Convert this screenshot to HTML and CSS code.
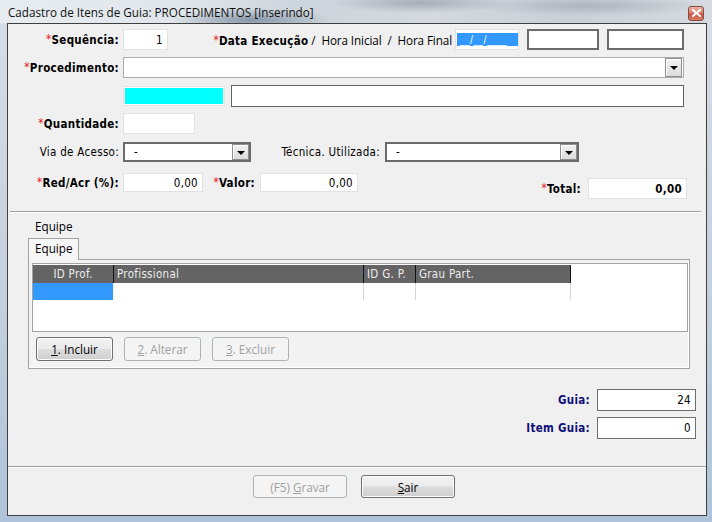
FILE: index.html
```html
<!DOCTYPE html>
<html>
<head>
<meta charset="utf-8">
<title>Cadastro de Itens de Guia</title>
<link rel="stylesheet" href="styles.css">
</head>
<body>
<div class="window">
  <div class="titlebar">
    <span class="title">Cadastro de Itens de Guia: PROCEDIMENTOS [Inserindo]</span>
    <span class="close"><svg width="9" height="8" viewBox="0 0 9 8"><path d="M1 1 L8 7 M8 1 L1 7" stroke="#fff" stroke-width="2" stroke-linecap="square"/></svg></span>
  </div>
  <div class="client">
    <div class="form">
      <div class="row r1">
        <span class="lbl b"><i>*</i>Sequência:</span>
        <div class="edit light seq num">1</div>
        <div class="lbl2"><span class="b"><i>*</i>Data Execução</span><span class="seg">&nbsp;/&nbsp; Hora Inicial&nbsp; /&nbsp; Hora Final</span></div>
        <div class="edit light date"><span class="sel">__/__/____</span></div>
        <div class="edit dark hi"></div>
        <div class="edit dark hf"></div>
      </div>
      <div class="row r2">
        <span class="lbl b"><i>*</i>Procedimento:</span>
        <div class="combo proc"><span class="ctext"></span><span class="dd"><span class="arrow"></span></span></div>
      </div>
      <div class="row r3">
        <span class="lbl"></span>
        <div class="cyanbox"><div class="cyan"></div></div>
        <div class="edit mid desc"></div>
      </div>
      <div class="row r4">
        <span class="lbl b"><i>*</i>Quantidade:</span>
        <div class="edit light qtd"></div>
      </div>
      <div class="row r5">
        <span class="lbl">Via de Acesso:</span>
        <div class="combo dark via"><span class="ctext">-</span><span class="dd"><span class="arrow"></span></span></div>
        <span class="lbl tec">Técnica. Utilizada:</span>
        <div class="combo dark tecc"><span class="ctext">-</span><span class="dd"><span class="arrow"></span></span></div>
      </div>
      <div class="row r6">
        <div class="grp">
          <span class="lbl b"><i>*</i>Red/Acr (%):</span>
          <div class="edit light red num">0,00</div>
          <span class="lbl b val"><i>*</i>Valor:</span>
          <div class="edit light valor num">0,00</div>
        </div>
        <div class="grp tot">
          <span class="lbl b totl"><i>*</i>Total:</span>
          <div class="edit light total num b">0,00</div>
        </div>
      </div>
    </div>

    <div class="sep top"></div>

    <div class="caption">Equipe</div>
    <div class="tabs"><span class="tab">Equipe</span></div>
    <div class="panel">
      <div class="grid">
        <div class="ghead">
          <span class="gc c1 center">ID Prof.</span>
          <span class="gc c2">Profissional</span>
          <span class="gc c3">ID G. P.</span>
          <span class="gc c4">Grau Part.</span>
        </div>
        <div class="grow">
          <span class="dc c1 selcell"></span>
          <span class="dc d2"></span>
          <span class="dc d3"></span>
          <span class="dc d4"></span>
        </div>
      </div>
      <div class="gbtns">
        <span class="btn act"><u>1</u>. Incluir</span>
        <span class="btn dis"><u>2</u>. Alterar</span>
        <span class="btn dis"><u>3</u>. Excluir</span>
      </div>
    </div>

    <div class="guia">
      <div class="grow2">
        <span class="glbl">Guia:</span>
        <div class="edit gbox num">24</div>
      </div>
      <div class="grow2 second">
        <span class="glbl">Item Guia:</span>
        <div class="edit gbox num">0</div>
      </div>
    </div>

    <div class="sep bottom"></div>

    <div class="footer">
      <span class="btn fbtn dis">(F5)&nbsp; <u>G</u>ravar</span>
      <span class="btn fbtn act"><u>S</u>air</span>
    </div>
  </div>
</div>
</body>
</html>
```

FILE: styles.css
```css
* { box-sizing: border-box; }
html, body { margin: 0; padding: 0; }
body {
  width: 712px;
  height: 522px;
  overflow: hidden;
  font-family: "DejaVu Sans Condensed", "DejaVu Sans", sans-serif;
  font-size: 11.5px;
  letter-spacing: 0.3px;
  color: #000;
}
.window {
  width: 712px;
  height: 522px;
  display: flex;
  flex-direction: column;
  padding: 0 5px 6px 7px;
  background: linear-gradient(to bottom, #d6dee6 0%, #c3cfdc 60%, #aec3da 100%);
}
.titlebar {
  height: 23px;
  margin: 0 -5px 0 -7px;
  padding-left: 8px;
  display: flex;
  align-items: center;
  background:
    radial-gradient(ellipse 80px 12px at 250px 20px, rgba(70, 95, 120, .55), transparent),
    radial-gradient(ellipse 90px 10px at 420px 3px, rgba(110, 120, 130, .45), transparent),
    radial-gradient(ellipse 120px 10px at 590px 6px, rgba(120, 128, 138, .35), transparent),
    linear-gradient(to right, #e7ecf0 0%, #e0e6eb 25%, #cdd5dc 42%, #d3d9df 60%, #c9d0d7 80%, #d5dbe1 100%);
}
.title {
  font-family: "Open Sans", "Noto Sans", sans-serif;
  font-size: 11.7px;
  color: #111;
  letter-spacing: 0;
}
.close {
  margin-left: auto;
  margin-right: 8px;
  margin-top: 3px;
  width: 16px;
  height: 15px;
  border: 1px solid #8a4a40;
  border-radius: 3px;
  background: linear-gradient(to bottom, #eab3a8 0%, #d8806f 45%, #c9553f 55%, #d87c66 100%);
  display: flex;
  align-items: center;
  justify-content: center;
}
.close svg { display: block; }
.client {
  height: 493px;
  border: 1px solid #3f3f3f;
  background: #f0f0f0;
  display: flex;
  flex-direction: column;
}
.form { padding-top: 5px; }
.row { display: flex; align-items: center; }
.lbl {
  width: 111px;
  margin-right: 4px;
  text-align: right;
  white-space: nowrap;
  flex: none;
}
.b { font-weight: bold; }
i { font-style: normal; font-weight: normal; color: #e8141c; position: relative; top: -1px; }
.edit {
  flex: none;
  background: #fff;
  white-space: nowrap;
  display: flex;
  align-items: center;
}
.light { border: 1px solid #e2e2e2; }
.dark { border: 2px solid #6b6b6b; }
.mid { border: 1px solid #626262; }
.num { justify-content: flex-end; padding-right: 4px; }
.seq { width: 45px; height: 21px; }
.lbl2 {
  width: 239px;
  margin-left: 45px;
  display: flex;
  align-items: baseline;
  justify-content: flex-end;
  white-space: nowrap;
  flex: none;
}
.seg {
  font-family: "Open Sans", "Noto Sans", sans-serif;
  font-size: 11.7px;
  letter-spacing: -0.1px;
}
.date { width: 64px; height: 21px; margin-left: 3px; padding-left: 1px; }
.sel {
  display: block;
  width: 61px;
  height: 13px;
  line-height: 13px;
  background: #3399ff;
  color: #fff;
  font-size: 10px;
  padding-left: 3px;
  letter-spacing: 0.5px;
}
.hi { width: 72px; height: 21px; margin-left: 8px; }
.hf { width: 77px; height: 21px; margin-left: 8px; }

.r2 { margin-top: 7px; }
.combo {
  flex: none;
  background: #fff;
  display: flex;
  align-items: center;
}
.proc { width: 561px; height: 21px; border: 1px solid #acacac; }
.ctext { padding-left: 8px; }
.dd {
  margin-left: auto;
  margin-right: 1px;
  width: 17px;
  height: 19px;
  border: 1px solid #8f8f8f;
  box-shadow: inset 1px 1px 0 #fff;
  background: linear-gradient(to bottom, #f2f2f2, #dcdcdc);
  display: flex;
  align-items: center;
  justify-content: center;
}
.arrow {
  width: 0;
  height: 0;
  border-left: 4px solid transparent;
  border-right: 4px solid transparent;
  border-top: 4px solid #000;
  margin-top: 1px;
}
.dark .dd { height: 16px; margin-right: 0; }

.r3 { margin-top: 7px; height: 22px; }
.cyanbox {
  flex: none;
  width: 102px;
  height: 20px;
  border: 1px solid #e4e4e4;
  padding: 1px;
  background: #fafafa;
}
.cyan { width: 100%; height: 100%; background: #00ffff; }
.desc { width: 453px; height: 22px; margin-left: 6px; }

.r4 { margin-top: 6px; }
.qtd { width: 72px; height: 21px; }

.r5 { margin-top: 8px; }
.via { width: 128px; height: 20px; }
.via .ctext, .tecc .ctext { padding-left: 9px; }
.tec { width: 129px; margin-right: 5px; }
.tecc { width: 194px; height: 20px; }

.r6 { margin-top: 11px; align-items: flex-start; }
.grp { display: flex; align-items: center; }
.red { width: 80px; height: 19px; }
.val { width: 52px; margin-right: 5px; }
.valor { width: 98px; height: 19px; }
.tot { margin-top: 5px; }
.totl { width: 223px; margin-right: 7px; }
.total { width: 99px; height: 21px; }

.sep {
  border-top: 1px solid #a0a0a0;
  border-bottom: 1px solid #fff;
  height: 2px;
  flex: none;
}
.sep.top { margin: 12px 5px 0 2px; }
.sep.bottom { margin-top: 27px; }

.caption {
  margin: 6px 0 0 27px;
  font-family: "Open Sans", "Noto Sans", sans-serif;
  font-size: 11.7px;
  letter-spacing: 0;
  line-height: 15px;
  height: 15px;
}
.tabs { margin: 4px 0 0 20px; display: flex; }
.tab {
  position: relative;
  z-index: 1;
  width: 51px;
  height: 22px;
  margin-bottom: -1px;
  border: 1px solid #a3a3a3;
  border-bottom: none;
  background: #f6f6f6;
  padding-left: 6px;
  line-height: 19px;
  font-family: "Open Sans", "Noto Sans", sans-serif;
  font-size: 11.7px;
  letter-spacing: 0;
}
.panel {
  margin-left: 20px;
  width: 662px;
  height: 110px;
  border: 1px solid #a3a3a3;
  box-shadow: inset -1px -1px 0 #fff;
  background: #f3f3f3;
  padding: 3px 1px 0 3px;
}
.grid {
  width: 656px;
  height: 69px;
  border: 1px solid #a3a3a3;
  background: #fff;
}
.ghead {
  margin-top: 1px;
  height: 18px;
  display: flex;
}
.gc {
  height: 18px;
  line-height: 18px;
  background: #646464;
  color: #ececec;
  padding-left: 3px;
  white-space: nowrap;
  overflow: hidden;
}
.center { text-align: center; padding-left: 0; }
.c1 { width: 80px; }
.c2 { width: 250px; border-left: 1px solid #111; }
.c3 { width: 52px; border-left: 1px solid #111; }
.c4 { width: 156px; border-left: 1px solid #111; border-right: 1px solid #111; }
.grow { display: flex; height: 17px; }
.dc { height: 17px; }
.selcell { background: #3399ff; }
.d2 { width: 250px; }
.d3 { width: 52px; border-left: 1px solid #d8d8d8; }
.d4 { width: 156px; border-left: 1px solid #d8d8d8; border-right: 1px solid #d8d8d8; }
.gbtns { display: flex; margin-top: 5px; padding-left: 4px; gap: 11px; }
.btn {
  flex: none;
  width: 77px;
  height: 24px;
  border-radius: 3px;
  display: flex;
  align-items: center;
  justify-content: center;
  font-family: "Open Sans", "Noto Sans", sans-serif;
  font-size: 11.7px;
  letter-spacing: 0;
  white-space: nowrap;
}
.act {
  border: 1px solid #707070;
  background: linear-gradient(to bottom, #f2f2f2 0%, #ebebeb 48%, #dddddd 52%, #cfcfcf 100%);
  box-shadow: inset 0 0 0 1px #fcfcfc;
  color: #000;
}
.dis {
  border: 1px solid #adb2b5;
  background: #f4f4f4;
  color: #a0a0a0;
}

.guia { margin-top: 20px; }
.grow2 { display: flex; justify-content: flex-end; align-items: center; padding-right: 10px; }
.grow2.second { margin-top: 6px; }
.glbl { font-weight: bold; color: #10107a; margin-right: 7px; }
.gbox { width: 99px; height: 22px; border: 1px solid #6e6e6e; }

.footer { display: flex; margin-top: 7px; padding-left: 245px; gap: 14px; }
.fbtn { width: 94px; height: 23px; }
```
